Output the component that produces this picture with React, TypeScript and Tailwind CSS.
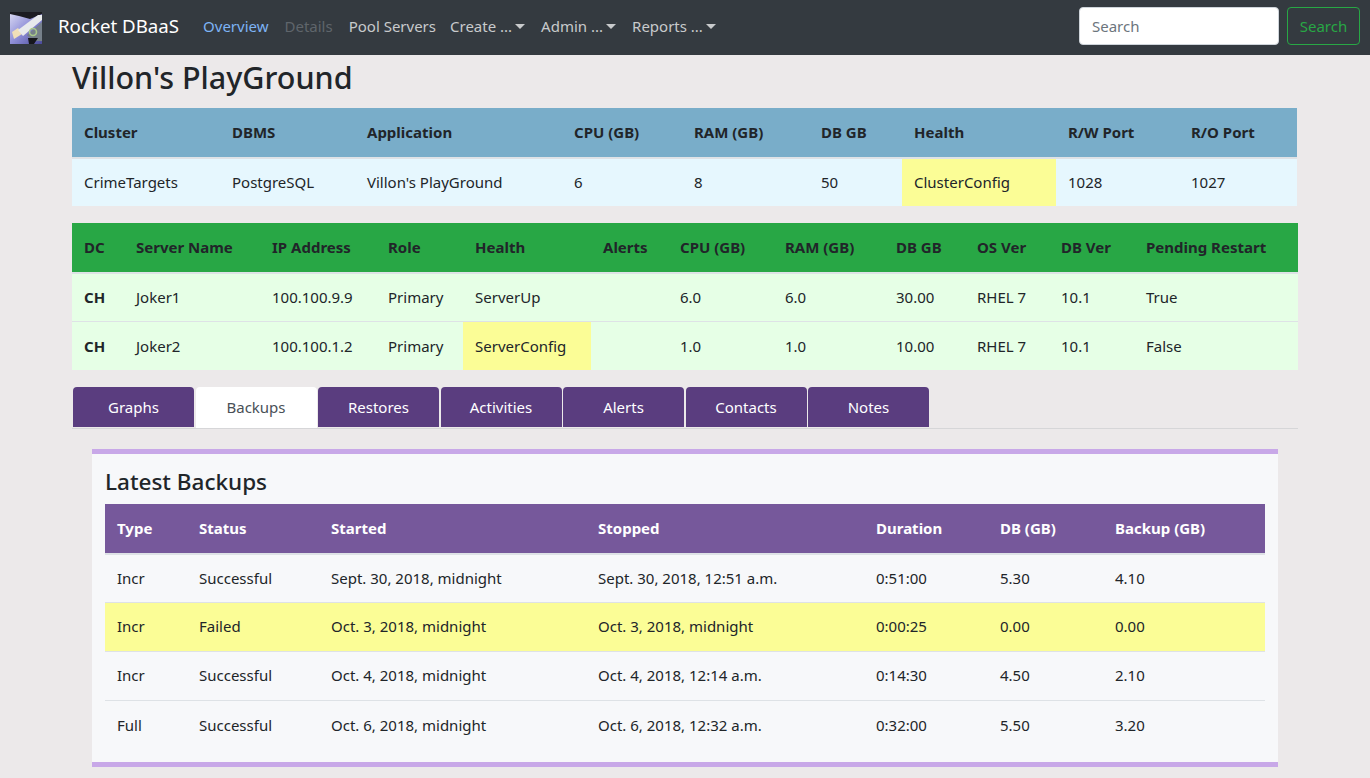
const font = "font-['Noto_Sans','Open_Sans',sans-serif]";

interface Column {
  label: string;
  width: string;
}

interface DataTableProps {
  columns: Column[];
  rows: { cells: string[]; highlight?: boolean; highlightCell?: number }[];
  headClass: string;
  bodyClass: string;
  boldFirst?: boolean;
}

function DataTable({ columns, rows, headClass, bodyClass, boldFirst }: DataTableProps) {
  return (
    <table className="table-fixed border-collapse w-full">
      <colgroup>
        {columns.map((c) => (
          <col key={c.label} className={c.width} />
        ))}
      </colgroup>
      <thead>
        <tr className={headClass}>
          {columns.map((c) => (
            <th key={c.label} className="h-[50px] px-3 text-left font-bold text-[15px] border-b-2 border-[#dee2e6] whitespace-nowrap">
              {c.label}
            </th>
          ))}
        </tr>
      </thead>
      <tbody>
        {rows.map((row, i) => (
          <tr key={i} className={row.highlight ? 'bg-[#fbfd96]' : bodyClass}>
            {row.cells.map((cell, j) => (
              <td
                key={j}
                className={`px-3 text-[15px] text-[#212529] whitespace-nowrap ${i > 0 ? 'h-[49px] border-t border-[#dee2e6]' : 'h-[48px]'} ${boldFirst && j === 0 ? 'font-bold' : ''} ${row.highlightCell === j ? 'bg-[#fbfd96]' : ''}`}
              >
                {cell}
              </td>
            ))}
          </tr>
        ))}
      </tbody>
    </table>
  );
}

function Logo() {
  return (
    <svg width="32" height="32" viewBox="0 0 32 32" className="shrink-0 mt-[3px]">
      <defs>
        <linearGradient id="sky" x1="0" y1="0" x2="1" y2="1">
          <stop offset="0" stopColor="#dcdcf4" />
          <stop offset="0.5" stopColor="#8f8fd8" />
          <stop offset="1" stopColor="#4a4a9a" />
        </linearGradient>
        <filter id="soft">
          <feGaussianBlur stdDeviation="0.5" />
        </filter>
        <clipPath id="box">
          <rect width="32" height="32" />
        </clipPath>
      </defs>
      <g clipPath="url(#box)">
        <g filter="url(#soft)">
          <rect width="32" height="32" fill="url(#sky)" />
          <path d="M0 0H32V2L20 7 9 4 0 2Z" fill="#1c1c20" />
          <path d="M2 20L4 27 12 22 8 16Z" fill="#f0dfb8" />
          <path d="M17 23L32 10V29H22Z" fill="#76808a" />
          <path d="M8 18L28 3 32 3 32 8 13 24Z" fill="#e8eaec" />
          <circle cx="23" cy="20" r="3.5" fill="none" stroke="#a9c98a" strokeWidth="1.6" />
          <path d="M18 26H28L24 32H19Z" fill="#18181c" />
        </g>
      </g>
    </svg>
  );
}

function Caret() {
  return <span className="ml-[3px] w-0 h-0 border-x-[5px] border-x-transparent border-t-[5px] border-t-current" />;
}

const clusterCols: Column[] = [
  { label: 'Cluster', width: 'w-[148px]' },
  { label: 'DBMS', width: 'w-[135px]' },
  { label: 'Application', width: 'w-[207px]' },
  { label: 'CPU (GB)', width: 'w-[120px]' },
  { label: 'RAM (GB)', width: 'w-[127px]' },
  { label: 'DB GB', width: 'w-[93px]' },
  { label: 'Health', width: 'w-[154px]' },
  { label: 'R/W Port', width: 'w-[123px]' },
  { label: 'R/O Port', width: 'w-[118px]' },
];

const serverCols: Column[] = [
  { label: 'DC', width: 'w-[52px]' },
  { label: 'Server Name', width: 'w-[136px]' },
  { label: 'IP Address', width: 'w-[116px]' },
  { label: 'Role', width: 'w-[87px]' },
  { label: 'Health', width: 'w-[128px]' },
  { label: 'Alerts', width: 'w-[77px]' },
  { label: 'CPU (GB)', width: 'w-[105px]' },
  { label: 'RAM (GB)', width: 'w-[111px]' },
  { label: 'DB GB', width: 'w-[81px]' },
  { label: 'OS Ver', width: 'w-[84px]' },
  { label: 'DB Ver', width: 'w-[85px]' },
  { label: 'Pending Restart', width: 'w-[164px]' },
];

const backupCols: Column[] = [
  { label: 'Type', width: 'w-[82px]' },
  { label: 'Status', width: 'w-[132px]' },
  { label: 'Started', width: 'w-[267px]' },
  { label: 'Stopped', width: 'w-[278px]' },
  { label: 'Duration', width: 'w-[124px]' },
  { label: 'DB (GB)', width: 'w-[115px]' },
  { label: 'Backup (GB)', width: 'w-[162px]' },
];

const tabs = ['Graphs', 'Backups', 'Restores', 'Activities', 'Alerts', 'Contacts', 'Notes'];

export default function App() {
  return (
    <div className={`${font} min-h-[778px] h-[778px] overflow-hidden bg-[#ece9ea] text-[#212529]`}>
      <nav className="h-[55px] bg-[#343a40] flex items-center px-[10px] pb-[3px]">
        <Logo />
        <span className="ml-4 text-[18.7px] text-white">Rocket DBaaS</span>
        <div className="ml-[24px] flex items-center gap-4 text-[15px]">
          <a className="text-[#7db3f5]">Overview</a>
          <a className="text-[#5f656b]">Details</a>
          <a className="text-[#c8cacc]">Pool Servers</a>
          <a className="text-[#c8cacc] flex items-center -ml-[2px]">Create ...<Caret /></a>
          <a className="text-[#c8cacc] flex items-center">Admin ...<Caret /></a>
          <a className="text-[#c8cacc] flex items-center">Reports ...<Caret /></a>
        </div>
        <div className="ml-auto flex items-center gap-2">
          <input
            placeholder="Search"
            className="w-[200px] h-[38px] px-3 rounded bg-white text-[15px] border border-[#ced4da] placeholder:text-[#6c757d]"
          />
          <button className="w-[73px] h-[38px] rounded border border-[#28a745] text-[#28a745] text-[15px]">Search</button>
        </div>
      </nav>

      <main className="ml-[72px] w-[1226px]">
        <h1 className="text-[30.5px] leading-[44px] font-medium">Villon's PlayGround</h1>
        <div className="mt-[9px] w-[1225px]">
          <DataTable
            columns={clusterCols}
            headClass="bg-[#79adc9]"
            bodyClass="bg-[#e6f7fe]"
            rows={[
              {
                cells: ['CrimeTargets', 'PostgreSQL', "Villon's PlayGround", '6', '8', '50', 'ClusterConfig', '1028', '1027'],
                highlightCell: 6,
              },
            ]}
          />
        </div>
        <div className="mt-[17px]">
          <DataTable
            columns={serverCols}
            headClass="bg-[#28a745]"
            bodyClass="bg-[#e6ffe6]"
            boldFirst
            rows={[
              { cells: ['CH', 'Joker1', '100.100.9.9', 'Primary', 'ServerUp', '', '6.0', '6.0', '30.00', 'RHEL 7', '10.1', 'True'] },
              { cells: ['CH', 'Joker2', '100.100.1.2', 'Primary', 'ServerConfig', '', '1.0', '1.0', '10.00', 'RHEL 7', '10.1', 'False'], highlightCell: 4 },
            ]}
          />
        </div>

        <div className="mt-[17px] flex items-start gap-[1.5px] pl-[1px] border-b border-[#d6d6d8] h-[42px]">
          {tabs.map((t) => (
            <div
              key={t}
              className={`w-[121px] flex items-center justify-center rounded-t text-[15px] ${t === 'Backups' ? 'h-[41px] bg-white text-[#495057]' : 'h-[40px] bg-[#5a3d7f] text-white'}`}
            >
              {t}
            </div>
          ))}
        </div>

        <section className="mt-[20px] ml-[20px] w-[1186px] h-[318px] bg-[#f7f8fa] border-y-[5px] border-[#c8a8e8] px-[13px]">
          <h2 className="text-[22.5px] pt-[5px] leading-[45px] font-medium">Latest Backups</h2>
          <DataTable
            columns={backupCols}
            headClass="bg-[#76589b] text-white"
            bodyClass=""
            rows={[
              { cells: ['Incr', 'Successful', 'Sept. 30, 2018, midnight', 'Sept. 30, 2018, 12:51 a.m.', '0:51:00', '5.30', '4.10'] },
              { cells: ['Incr', 'Failed', 'Oct. 3, 2018, midnight', 'Oct. 3, 2018, midnight', '0:00:25', '0.00', '0.00'], highlight: true },
              { cells: ['Incr', 'Successful', 'Oct. 4, 2018, midnight', 'Oct. 4, 2018, 12:14 a.m.', '0:14:30', '4.50', '2.10'] },
              { cells: ['Full', 'Successful', 'Oct. 6, 2018, midnight', 'Oct. 6, 2018, 12:32 a.m.', '0:32:00', '5.50', '3.20'] },
            ]}
          />
        </section>
      </main>
    </div>
  );
}
